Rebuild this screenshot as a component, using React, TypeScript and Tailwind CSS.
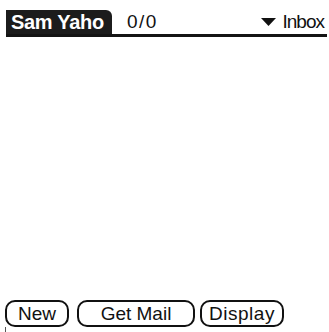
import React from "react";

export default function App() {
  return (
    <div className="w-[329px] h-[332px] bg-white flex flex-col font-['Liberation_Sans',sans-serif] text-[#111]">
      <div className="mt-[10px] ml-[6px] mr-[2px] h-[27px] flex items-end border-b-[3px] border-[#141414]">
        <div className="w-[106px] h-[24px] bg-[#1c1c1c] text-white font-bold text-[20px] leading-[25px] pl-[5px] rounded-tr-[6px] whitespace-nowrap tracking-[-0.3px]">
          Sam Yaho
        </div>
        <div className="ml-[15px] text-[19px] leading-[24px] tracking-[1.5px]">0/0</div>
        <div className="ml-auto mr-[3px] flex items-center gap-[7px] leading-[24px]">
          <svg width="15" height="8" viewBox="0 0 15 8" className="mb-[1px]">
            <polygon points="0,0 15,0 7.5,8" fill="#111" />
          </svg>
          <span className="text-[19px] tracking-[-1px]">Inbox</span>
        </div>
      </div>
      <div className="flex-1" />
      <div className="flex pl-[5px] items-end">
        <div className="w-[64px] h-[27px] border-2 border-[#111] rounded-[10px] flex items-center justify-center text-[19px] leading-none">
          New
        </div>
        <div className="ml-[8px] w-[118px] h-[27px] border-2 border-[#111] rounded-[10px] flex items-center justify-center text-[19px] leading-none">
          Get Mail
        </div>
        <div className="ml-[5px] w-[84px] h-[27px] border-2 border-[#111] rounded-[10px] flex items-center justify-center text-[19px] leading-none tracking-[0.5px]">
          Display
        </div>
      </div>
      <div className="h-[5px] ml-[5px] mr-[40px] border-l border-[#555]" />
    </div>
  );
}
